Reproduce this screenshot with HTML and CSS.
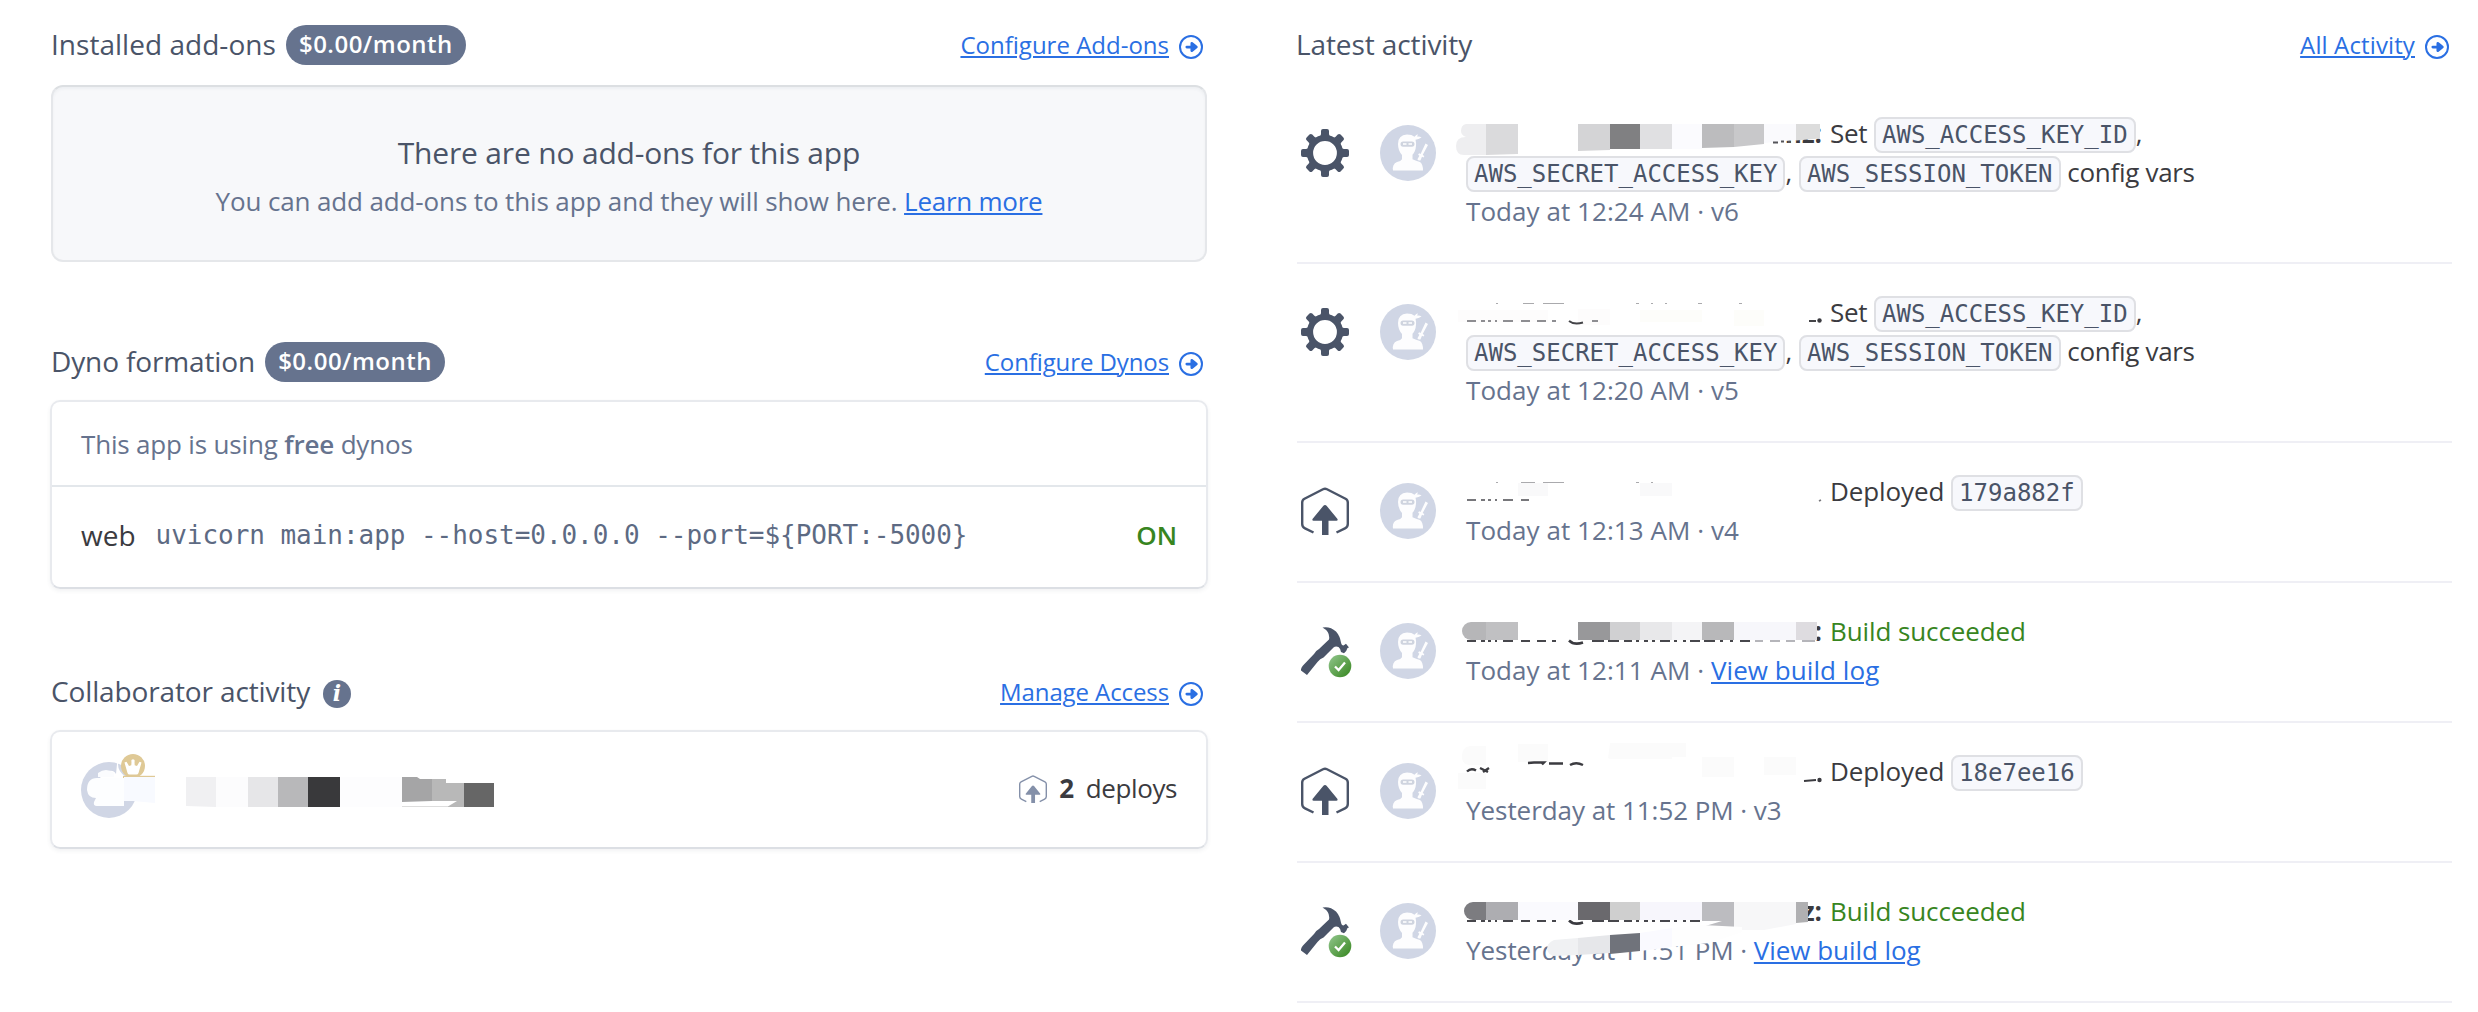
FILE: index.html
```
<!DOCTYPE html>
<html lang="en">
<head>
<meta charset="utf-8">
<title>App overview</title>
<link rel="stylesheet" href="styles.css">
</head>
<body>
<svg class="defs" width="0" height="0" aria-hidden="true">
  <defs>
    <linearGradient id="green" x1="0" y1="0" x2="1" y2="1"><stop offset="0" stop-color="#93c78f"/><stop offset="1" stop-color="#35851d"/></linearGradient>
    <symbol id="go" viewBox="0 0 24 24">
      <circle cx="12" cy="12" r="11" fill="none" stroke="#2a6fe3" stroke-width="2"/>
      <path d="M7.500 12h5M13 8l5 4-5 4z" fill="#2a6fe3" stroke="#2a6fe3" stroke-width="3" stroke-linecap="round" stroke-linejoin="round" transform="translate(1 1.1) scale(.91)"/>
    </symbol>
    <symbol id="gear" viewBox="0 0 48 48">
      <circle cx="24" cy="24" r="15" fill="none" stroke="#4a5468" stroke-width="6.200"/>
      <g fill="#4a5468">
        <path id="tooth" d="M18 8q2-1 2-3V2q0-2 2-2h4q2 0 2 2v3q0 2 2 3v3H18z"/>
        <use href="#tooth" transform="rotate(90 24 24)"/><use href="#tooth" transform="rotate(180 24 24)"/><use href="#tooth" transform="rotate(270 24 24)"/>
        <g transform="rotate(45 24 24)"><use href="#tooth"/><use href="#tooth" transform="rotate(90 24 24)"/><use href="#tooth" transform="rotate(180 24 24)"/><use href="#tooth" transform="rotate(270 24 24)"/></g>
      </g>
    </symbol>
    <symbol id="deploy" viewBox="0 0 48 48">
      <path d="M12.500 45.500l-8.500-4.200Q1.200 40 1.200 37V15.500Q1.200 13 3.500 11.800L22 2.200q2-1 4 0l18.500 9.600q2.300 1.200 2.300 3.700V37q0 3-2.800 4.300L35.500 45.500" fill="none" stroke="currentColor" stroke-width="2.400"/>
      <path d="M24 18q1 0 1.800 1L36.500 32q.6 1.800-1 1.800H27.500V48h-6.500V33.800H12.500q-1.600 0-1-1.800L22.200 19Q23 18 24 18z" fill="currentColor"/>
    </symbol>
    <symbol id="hammer" viewBox="0 0 52 52">
      <path d="M21.500.5Q29-1 35 4.500 39 9 40 15.500q.5 3 2.500 3l2.500-1.700L48 20.500 46.500 21q-.5 2.500-3.500 5.300l-3-1.300q-.5-3.500-2.500-5-3-1-5 .5L22.500 30.500Q19 31.500 16.500 35L6 48 0 43.500Q-.3 41 2 38.500L13 27q2-3.500 5-5l10-9.500Q29.500 5 21.500.5z" fill="#4a5468"/>
      <circle cx="39" cy="39" r="11.300" fill="url(#green)"/>
      <path d="M34 39.500l3.600 3.500 6.400-7.500" fill="none" stroke="#fff" stroke-width="2.300"/>
    </symbol>
    <symbol id="ninja" viewBox="0 0 56 56">
      <circle cx="28" cy="28" r="28" fill="#d0d6e5"/>
      <g fill="#fdfdfe">
        <path d="M18 19q0-9 9-9.500 5 0 7.500 2.200Q37 9 38 9.600l-1 1.900q3-.3 4.500.9-3 2-6 2.300.8 3 .5 6-.5 6-3.500 9v4.500Q36 36 40 37q3 2 3 8.500H13q-1-6.500 4-8.500 4-.8 5-2.800V30q-4-4.500-4-11z"/>
        <path d="M45.500 18.500l2.500 1.600-5.300 9.800 1.700 1.200-.9 1.500-1.500-.8-1.600 3.600q-2.400.4-3-1.200l2-3.400-1.300-1 1-1.600 1.500.8z"/>
      </g>
      <rect x="20.500" y="16.500" width="14" height="5.200" rx="2.600" fill="#cfd4df"/>
      <path d="M23 19h3.500M28.500 19H32" stroke="#f4f5f8" stroke-width="2"/>
    </symbol>
  </defs>
</svg>

<main class="page">
  <div class="column">
    <section>
      <header class="head">
        <h2 class="t-addons">Installed add-ons</h2><span class="pill">$0.00/month</span>
        <a class="more" href="#"><span>Configure Add-ons</span><svg><use href="#go"/></svg></a>
      </header>
      <div class="empty">
        <h3>There are no add-ons for this app</h3>
        <p>You can add add-ons to this app and they will show here. <a href="#">Learn more</a></p>
      </div>
    </section>

    <section class="dynos">
      <header class="head">
        <h2 class="t-dyno">Dyno formation</h2><span class="pill">$0.00/month</span>
        <a class="more tight" href="#"><span>Configure Dynos</span><svg><use href="#go"/></svg></a>
      </header>
      <div class="card">
        <p class="plan">This app is using <b>free</b> dynos</p>
        <div class="process"><span class="kind">web</span><code>uvicorn main:app --host=0.0.0.0 --port=${PORT:-5000}</code><b class="on">ON</b></div>
      </div>
    </section>

    <section class="people">
      <header class="head">
        <h2 class="t-collab">Collaborator activity</h2><i class="info">i</i>
        <a class="more tight" href="#"><span>Manage Access</span><svg><use href="#go"/></svg></a>
      </header>
      <div class="card person">
        <svg class="member" viewBox="81 753 74 64">
          <circle cx="109" cy="789" r="28" fill="#d0d6e5"/>
          <path d="M118 753v10q0 8 8 13v4H98l4-6q10-8 14-1z" fill="#fff"/>
          <circle cx="133" cy="765" r="12" fill="#dfc996"/>
          <path d="M127.500 772l-3-10.500 2-.8 2.500 4.300 2.300-.8.2-3.200q-.8-2.500 1.500-2.700 2.300.2 1.500 2.700l.2 3.200 2.300.8 2.500-4.300 2 .8-3 10.500q-.5 1.500-2 1.500h-7q-1.500 0-2-1.500z" fill="#fff"/>
          <path d="M98 772q8-6 16 0v4H98z" fill="#fbfcfe"/>
          <path d="M123 774.800h32v3h-32z" fill="#dfc996"/>
          <path d="M97 777h27v28H97q-4 0-3-4l2-4q-8 0-9-8 0-12 10-12z" fill="#fdfeff"/>
          <path d="M124 776h31v26l-22-2h-9z" fill="#f8faff"/>
        </svg>
        <svg class="mosaic" viewBox="186 776 308 30">
          <path d="M186 776h30v30l-30-1z" fill="#f0f0f2"/><path d="M216 776h32v30h-32z" fill="#fcfcfd"/><path d="M248 776h30v30h-30z" fill="#e6e6e8"/><path d="M278 776h30v30h-30z" fill="#b8b8ba"/><path d="M308 776h32v30h-32z" fill="#39393b"/><path d="M340 776h62v30h-62z" fill="#fdfdfe"/>
          <path d="M402 776h15l3 2h12v22l-30 1z" fill="#a5a5a6"/><path d="M432 778h14v4h18v24h-17l10-6h-25z" fill="#b8b8b8"/><path d="M464 782h30v24h-30z" fill="#666"/><path d="M402 805h46v1h-46z" fill="#ddd"/>
        </svg>
        <span class="deploys"><svg><use href="#deploy"/></svg><b>2</b><span>deploys</span></span>
      </div>
    </section>
  </div>

  <section class="activity">
    <header class="head">
      <h2 class="t-latest">Latest activity</h2>
      <a class="more all" href="#"><span>All Activity</span><svg><use href="#go"/></svg></a>
    </header>
    <ul>
      <li>
        <svg class="icon"><use href="#gear"/></svg><svg class="avatar"><use href="#ninja"/></svg>
        <div class="event">
          <span class="who">nz:<svg viewBox="1456 103 370 90">
            <path d="M1486 124h-20q-5 1-5 7 0 4 5 6-10 0-10 9 0 9 8 9h22z" fill="#eeeef0"/><path d="M1486 124h32v30l-32 1z" fill="#dadadc"/><path d="M1518 124h60v28h-60z" fill="#fff"/><path d="M1578 124h32v26l-32 1z" fill="#d4d4d6"/><path d="M1610 124h30v25h-30z" fill="#808082"/><path d="M1640 124h32v25h-32z" fill="#e0e0e2"/><path d="M1672 124h30v25h-30z" fill="#fbfbfe"/><path d="M1702 124h32v23l-32 1z" fill="#bcbcbe"/><path d="M1734 124h30v20l-30 3z" fill="#c8c8ca"/><path d="M1764 124h32v16l-32 3z" fill="#fafafd"/><path d="M1796 124h24v14.500l-24 2z" fill="#dcdcdc"/>
            <path d="M1773 142.500h5M1781 141.500h3M1788 142h3" stroke="#55555a" stroke-width="2"/>
          </svg></span><span class="set">Set</span> <code>AWS_ACCESS_KEY_ID</code>,<br>
          <code>AWS_SECRET_ACCESS_KEY</code>, <code>AWS_SESSION_TOKEN</code> <span class="vars">config vars</span>
          <p>Today at 12:24 AM · v6</p>
        </div>
      </li>
      <li>
        <svg class="icon"><use href="#gear"/></svg><svg class="avatar"><use href="#ninja"/></svg>
        <div class="event">
          <span class="who"><svg viewBox="1456 282 370 90">
            <path d="M1458 310h90v12h-90zM1578 309h32v16h-32z" fill="#fdfcfc"/><path d="M1640 310h62v12h-62zM1734 310h30v16h-30z" fill="#fdfdfa"/>
            <path d="M1496 303.500h2M1523 303.500h11M1543 303.500h21M1636 303.500h3M1651 303.500h2M1665 303.500h2M1698 303.500h4M1739 303.500h3" stroke="#aaaaad" stroke-width="1.200"/>
            <path d="M1467 321h9M1481 321h4M1488 321h3M1495 321h2M1503 321h10M1521 321h9M1537 321h9M1552 321h4M1592 321h6" stroke="#8e8e92" stroke-width="1.800"/>
            <path d="M1569 321q5 4 14 1.500M1809 321h7" fill="none" stroke="#444448" stroke-width="2"/><circle cx="1819.500" cy="320.500" r="2.200" fill="#3b3b40"/>
          </svg></span><span class="set">Set</span> <code>AWS_ACCESS_KEY_ID</code>,<br>
          <code>AWS_SECRET_ACCESS_KEY</code>, <code>AWS_SESSION_TOKEN</code> <span class="vars">config vars</span>
          <p>Today at 12:20 AM · v5</p>
        </div>
      </li>
      <li>
        <svg class="icon"><use href="#deploy"/></svg><svg class="avatar"><use href="#ninja"/></svg>
        <div class="event">
          <span class="who"><svg viewBox="1456 461 370 90">
            <path d="M1518 483h30v13h-30zM1640 483h32v13h-32z" fill="#f9f9fa"/>
            <path d="M1496 482.500h2M1521 482.500h14M1543 482.500h21M1636 482.500h3M1651 482.500h2" stroke="#aaaaad" stroke-width="1.200"/>
            <path d="M1467 500h9M1481 500h4M1488 500h3M1495 500h2M1503 500h10M1521 500h8M1819 501l2-1" stroke="#77777b" stroke-width="1.800"/>
          </svg></span><span class="deployed">Deployed</span> <code>179a882f</code>
          <p>Today at 12:13 AM · v4</p>
        </div>
      </li>
      <li>
        <svg class="icon hammer"><use href="#hammer"/></svg><svg class="avatar"><use href="#ninja"/></svg>
        <div class="event">
          <span class="who">:<svg viewBox="1456 601 370 90">
            <path d="M1486 622h-15a9 9 0 0 0 0 18h15z" fill="#b6b6b8"/><path d="M1486 622h32v18h-32z" fill="#c0c0c2"/><path d="M1578 622h32v18h-32z" fill="#98989a"/><path d="M1610 622h30v18h-30z" fill="#d0d0d2"/><path d="M1640 622h32v18h-32z" fill="#e8e8ea"/><path d="M1672 622h30v18h-30z" fill="#f4f4f6"/><path d="M1702 622h32v18h-32z" fill="#b8b8ba"/><path d="M1734 622h62v18h-62z" fill="#f7f7fb"/><path d="M1796 622h21v18h-21z" fill="#dedce0"/>
            <path d="M1467 641h9M1481 641h4M1488 641h3M1495 641h2M1503 641h10M1521 641h9M1537 641h9M1552 641h4M1592 641h12M1608 641h11M1624 641h8M1636 641h3M1644 641h4M1652 641h3M1660 641h10M1674 641h3M1683 641h3M1690 641h10M1704 641h11M1720 641h3M1730 641h3M1740 641h10" stroke="#47474c" stroke-width="2"/>
            <path d="M1755 641h8M1770 641h10M1786 641h9M1802 641h13" stroke="#b5b5ba" stroke-width="2"/><path d="M1569 640.500q5 5 14 2" fill="none" stroke="#3b3b40" stroke-width="2.500"/>
          </svg></span><span class="ok">Build succeeded</span>
          <p>Today at 12:11 AM · <a href="#">View build log</a></p>
        </div>
      </li>
      <li>
        <svg class="icon"><use href="#deploy"/></svg><svg class="avatar"><use href="#ninja"/></svg>
        <div class="event">
          <span class="who"><svg viewBox="1456 741 370 90">
            <path d="M1470 746h16v19h-16q-8 0-8-9t8-10zM1518 744h30v18h-30zM1610 743h62v16h-62l-2-1zM1672 743h14v14h-14zM1702 757h32v20h-32zM1764 757h32v18h-32zM1458 773h28v16h-28z" fill="#fbfbfb"/>
            <path d="M1467 771.500q4-4 9-1M1480 768l8 4M1483 772l6-4M1528 763l6-.5h10l-2 2M1549 763.500h14M1570 765q6-3.500 13 0" fill="none" stroke="#3b3b40" stroke-width="2.400"/>
            <path d="M1804 781l12-1" stroke="#3b3b40" stroke-width="2"/><circle cx="1819.500" cy="780" r="2.200" fill="#3b3b40"/>
          </svg></span><span class="deployed">Deployed</span> <code>18e7ee16</code>
          <p class="y">Yesterday at 11:52 PM · v3</p>
        </div>
      </li>
      <li>
        <svg class="icon hammer"><use href="#hammer"/></svg><svg class="avatar"><use href="#ninja"/></svg>
        <div class="event">
          <span class="who">z:<svg viewBox="1456 881 370 90">
            <path d="M1467 921h9M1481 921h4M1488 921h3M1495 921h2M1503 921h10M1521 921h9M1537 921h9M1552 921h4M1592 921h12M1608 921h11M1624 921h8M1636 921h3M1644 921h4M1652 921h3M1660 921h10M1674 921h3M1683 921h3M1690 921h10" stroke="#47474c" stroke-width="2"/><path d="M1569 920.500q5 5 14 2" fill="none" stroke="#3b3b40" stroke-width="2.500"/>
            <path d="M1486 902h-13a9 9 0 0 0 0 18h13z" fill="#7c7c80"/><path d="M1486 902h32v18h-32z" fill="#adadb1"/><path d="M1518 902h60v18h-60z" fill="#fafafe"/><path d="M1578 902h32v18h-32z" fill="#6a696d"/><path d="M1610 902h30v18h-30z" fill="#cfcfcf"/><path d="M1640 902h62v18h-62z" fill="#f7f6fc"/>
            <path d="M1702 902h32v28h-32v-3l20-6h-20z" fill="#bcbcc0"/><path d="M1734 902h62v22l-32 6h-30z" fill="#f7f7f8"/><path d="M1796 902h12v20l-12 1z" fill="#b0b0b2"/>
            <path d="M1578 938l-24 2q-7 3-7 9 1 5 6 7l25-1z" fill="#f0f1f3"/><path d="M1578 938l32-3v18l-32 2z" fill="#e6e7ea"/><path d="M1610 935l30-2v18l-30 3z" fill="#70737b"/><path d="M1640 933l32-5v19l-32 4z" fill="#fafaff"/><path d="M1672 928l30-3 40 2v5l-32 11-38 4z" fill="#fefefe"/>
          </svg></span><span class="ok">Build succeeded</span>
          <p class="y">Yesterday at 11:51 PM · <a href="#">View build log</a></p>
        </div>
      </li>
    </ul>
  </section>
</main>
</body>
</html>
```
FILE: styles.css
```
* { box-sizing: border-box; }
body { margin: 0; background: #fff; color: #3b3b40; font: 26px/39px "Open Sans", "Noto Sans", sans-serif; overflow: hidden; }
h2, h3, p, ul { margin: 0; padding: 0; font-weight: 400; }
a { color: #2a6fe3; text-decoration: underline; text-decoration-thickness: 2px; text-underline-offset: 2px; }
svg { display: block; flex: none; }
.defs { position: absolute; }
code { font-family: "DejaVu Sans Mono", monospace; }

.page { display: grid; grid-template-columns: 1158px 1155px; column-gap: 89px; padding: 25px 0 0 50px; }

.head { display: flex; align-items: center; height: 40px; padding-right: 5px; }
.head h2 { font-size: 28px; line-height: 40px; color: #4a5468; padding-bottom: 3px; margin-left: 1px; white-space: nowrap; }
.head .t-addons { letter-spacing: .03px; }
.head .t-dyno { letter-spacing: -.13px; }
.head .t-collab { letter-spacing: -.13px; }
.head .t-latest { margin-left: -1px; letter-spacing: -.1px; }
.pill { margin-left: 10px; height: 40px; width: 180px; border-radius: 20px; background: #66738e; color: #fff; font-size: 24px; font-weight: 600; line-height: 37px; text-align: center; letter-spacing: .5px; }
.more { display: flex; align-items: center; gap: 10px; margin-left: auto; font-size: 24px; line-height: 38px; text-decoration: none; }
.more span { padding-bottom: 1px; text-decoration: underline; text-decoration-thickness: 2px; text-underline-offset: 2px; }
.more.tight { letter-spacing: -.1px; }
.more.all { letter-spacing: .12px; }
.more svg { width: 24px; height: 24px; margin-top: 4px; }
.info { margin: 4px 0 0 13px; width: 28px; height: 28px; border-radius: 50%; background: #66738e; color: #fff; font: italic bold 22px/26px "DejaVu Serif", serif; text-align: center; }

.empty { margin: 20px 0 0 1px; width: 1156px; height: 177px; padding-top: 43px; border: 2px solid #e5e7ea; border-top-color: #dcdfe2; border-radius: 12px; background: #f7f8fa; box-shadow: inset 0 2px 3px rgba(60, 70, 90, .05); text-align: center; }
.empty h3 { font-size: 30px; line-height: 45px; color: #4a5468; letter-spacing: -.18px; }
.empty p { margin-top: 7px; color: #66738e; letter-spacing: -.13px; }
.empty a { letter-spacing: -.25px; }

.dynos { margin-top: 80px; }
.people { margin-top: 83px; }
.card { margin-top: 18px; border: 2px solid #e8eaee; border-bottom-color: #dcdfe4; border-radius: 10px; box-shadow: 0 2px 4px rgba(60, 70, 90, .07); }
.plan { height: 85px; padding: 23px 29px 0; color: #66738e; border-bottom: 2px solid #e3e7eb; letter-spacing: -.18px; }
.plan b { font-weight: 600; }
.process { display: flex; align-items: center; height: 100px; padding: 0 29px 3px 29px; }
.kind { font-size: 28px; }
.process code { margin-left: 20px; font-size: 26px; color: #5d6a83; letter-spacing: -.04px; }
.on { margin-left: auto; color: #38851f; font-weight: 600; }

.person { display: flex; align-items: center; height: 119px; padding: 0 29px 0 29px; }
.member { width: 74px; height: 64px; margin-top: -8px; }
.mosaic { width: 308px; height: 30px; margin: 4px 0 0 31px; }
.deploys { display: flex; align-items: center; margin-left: auto; padding-bottom: 2px; letter-spacing: -.4px; }
.deploys svg { width: 28px; height: 28px; margin-right: 12px; color: #8490a9; }
.deploys b { margin-right: 12px; }

.activity .head { padding-right: 3px; }
ul { list-style: none; margin-top: 20px; }
li { display: flex; align-items: flex-start; padding: 29px 0 31px; border-bottom: 2px solid #efeff5; }
.icon { width: 48px; height: 48px; margin: 15px 0 0 4px; color: #4a5468; }
.icon.hammer { width: 52px; height: 52px; margin-right: -4px; }
.avatar { width: 56px; height: 56px; margin: 11px 0 0 31px; }
.event { margin-left: 30px; white-space: nowrap; }
.event p { color: #66738e; letter-spacing: .06px; }
.event p.y { letter-spacing: -.05px; }
.event code { padding: 2px 6px; border: 2px solid #dfe0e4; border-radius: 8px; background: #f7f8fc; color: #4a5468; font-size: 24px; line-height: 1; }
.who { position: relative; display: inline-block; width: 356px; height: 39px; margin-right: 8px; vertical-align: top; text-align: right; font-weight: 700; }
.who svg { position: absolute; left: -10px; top: -11px; width: 370px; height: 90px; }
.set { letter-spacing: -.3px; }
.vars { letter-spacing: -.3px; }
.deployed { letter-spacing: -.1px; }
.ok { color: #38851f; letter-spacing: -.1px; }
```
